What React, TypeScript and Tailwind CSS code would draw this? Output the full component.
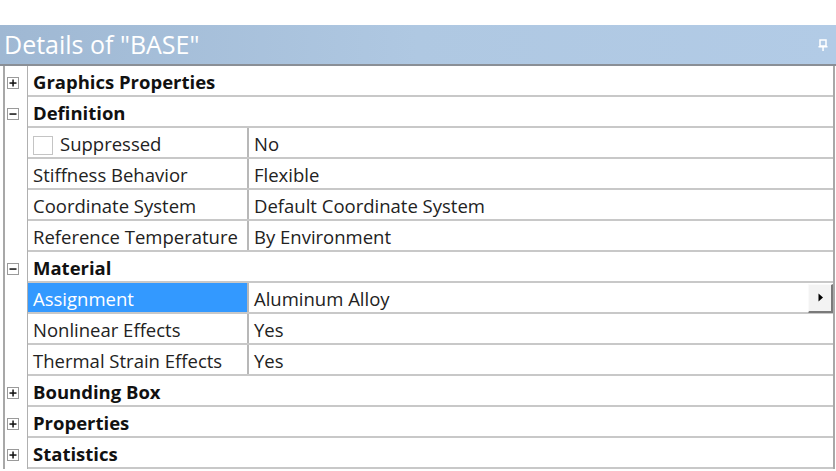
import React from "react";

type Row =
  | { kind: "group"; label: string; open: boolean }
  | { kind: "prop"; label: string; value: string; check?: boolean; selected?: boolean; dropdown?: boolean };

const rows: Row[] = [
  { kind: "group", label: "Graphics Properties", open: false },
  { kind: "group", label: "Definition", open: true },
  { kind: "prop", label: "Suppressed", value: "No", check: true },
  { kind: "prop", label: "Stiffness Behavior", value: "Flexible" },
  { kind: "prop", label: "Coordinate System", value: "Default Coordinate System" },
  { kind: "prop", label: "Reference Temperature", value: "By Environment" },
  { kind: "group", label: "Material", open: true },
  { kind: "prop", label: "Assignment", value: "Aluminum Alloy", selected: true, dropdown: true },
  { kind: "prop", label: "Nonlinear Effects", value: "Yes" },
  { kind: "prop", label: "Thermal Strain Effects", value: "Yes" },
  { kind: "group", label: "Bounding Box", open: false },
  { kind: "group", label: "Properties", open: false },
  { kind: "group", label: "Statistics", open: false },
];

function Expander({ open }: { open: boolean }) {
  return (
    <div className="w-[12px] h-[12px] border border-[#9a9a9a] bg-white flex items-center justify-center">
      <svg width="10" height="10" viewBox="0 0 10 10">
        <rect x="1.5" y="4.3" width="7" height="1.5" fill="#111" />
        {!open && <rect x="4.3" y="1.5" width="1.5" height="7" fill="#111" />}
      </svg>
    </div>
  );
}

export default function App() {
  return (
    <div
      className="w-[836px] h-[471px] bg-white overflow-hidden"
      style={{ fontFamily: '"Open Sans", "Noto Sans", Arial, sans-serif' }}
    >
      <div className="h-[25px]" />
      <div className="h-[41px] bg-gradient-to-r from-[#9fb8d3] via-[#afc8e2] to-[#b2cbe6] flex items-center justify-between pl-[4px] pr-[8px] border-b-2 border-[#8a8f96]">
        <span className="text-white text-[25px] leading-none">Details of "BASE"</span>
        <svg width="10" height="12" viewBox="0 0 10 12">
          <rect x="2" y="1" width="6" height="6" fill="none" stroke="#fff" strokeWidth="1.5" />
          <rect x="0.5" y="7" width="9" height="1.5" fill="#fff" />
          <rect x="4.3" y="8" width="1.5" height="4" fill="#fff" />
        </svg>
      </div>
      <div className="ml-[3px] w-[832px] border-l-2 border-r-2 border-[#a8a8a8] bg-white">
        {rows.map((r, i) => (
          <div key={i} className="flex h-[31px] border-b-2 border-[#c8c8c8]">
            <div className="w-[23px] shrink-0 flex items-center justify-start pl-[2px] pt-[2px] border-r border-[#b0b0b0] -mb-[2px] bg-white">
              {r.kind === "group" && <Expander open={r.open} />}
            </div>
            {r.kind === "group" ? (
              <div className="flex-1 flex items-center pl-[5px] pt-[3px] text-[18.5px] font-bold text-[#111]">{r.label}</div>
            ) : (
              <>
                <div
                  className={
                    "w-[221px] shrink-0 flex items-center pl-[5px] pt-[3px] text-[18.5px] border-r-2 border-[#b8b8b8] whitespace-nowrap " +
                    (r.selected ? "bg-[#3399ff] text-white" : "text-[#222]")
                  }
                >
                  {r.check && (
                    <span className="w-[20px] h-[19px] mt-[2px] border border-[#c4c4c4] bg-white mr-[7px] shrink-0" />
                  )}
                  {r.label}
                </div>
                <div className="flex-1 flex items-center pl-[5px] text-[18.5px] text-[#222] justify-between">
                  <span className="pt-[3px]">{r.value}</span>
                  {r.dropdown && (
                    <div className="w-[25px] h-[29px] mt-[1px] bg-[#f3f3f3] border-r-2 border-b-2 border-[#7a7a7a] border-l border-t border-l-[#fafafa] border-t-[#fafafa] flex items-center justify-center">
                      <svg width="7" height="9" viewBox="0 0 7 9">
                        <path d="M1.5 0.5 L6 4.5 L1.5 8.5 Z" fill="#000" />
                      </svg>
                    </div>
                  )}
                </div>
              </>
            )}
          </div>
        ))}
      </div>
    </div>
  );
}
